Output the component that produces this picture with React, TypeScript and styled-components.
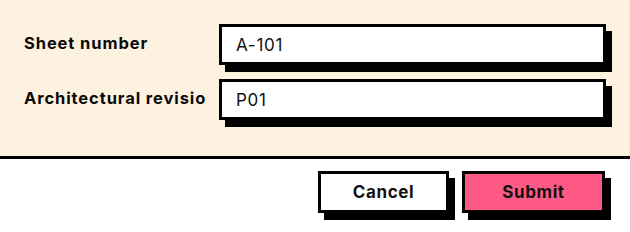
import React from "react";
import styled, { createGlobalStyle } from "styled-components";

const Global = createGlobalStyle`
  html, body { margin: 0; padding: 0; background: #ffffff; }
  * { box-sizing: border-box; }
  body { font-family: Inter, "Noto Sans", sans-serif; color: #0a0a0a; }
`;

const Page = styled.div`
  width: 630px;
  display: flex;
  flex-direction: column;
`;

const Form = styled.div`
  background: #fdf1df;
  border-bottom: 3px solid #000;
  padding: 24px 24px 36px 24px;
  display: flex;
  flex-direction: column;
  gap: 14px;
`;

const Row = styled.div`
  display: grid;
  grid-template-columns: 183px 1fr;
  column-gap: 12px;
  align-items: center;
  height: 41px;
`;

const Label = styled.label`
  font-size: 16.5px;
  font-weight: 700;
  letter-spacing: 0.9px;
  white-space: nowrap;
  overflow: hidden;
  line-height: 20px;
  margin-top: -4px;
`;

const Input = styled.input`
  height: 41px;
  width: 100%;
  border: 3px solid #000;
  box-shadow: 6px 7px 0 #000;
  background: #fff;
  padding: 0 14px;
  font-family: Inter, "Noto Sans", sans-serif;
  font-size: 17px;
  letter-spacing: 0.7px;
  color: #111;
  outline: none;
  border-radius: 0;
`;

const Footer = styled.div`
  display: flex;
  justify-content: flex-end;
  gap: 13px;
  padding: 12px 25px 19px 0;
`;

const Button = styled.button<{ $primary?: boolean }>`
  height: 42px;
  width: ${(p) => (p.$primary ? "143px" : "131px")};
  border: 3px solid #000;
  box-shadow: 6px 7px 0 #000;
  background: ${(p) => (p.$primary ? "#ff5a86" : "#ffffff")};
  font-family: Inter, "Noto Sans", sans-serif;
  font-size: 17px;
  font-weight: 700;
  letter-spacing: 0.6px;
  color: #111;
  border-radius: 0;
  cursor: pointer;
  padding: 0;
`;

export default function App() {
  return (
    <Page>
      <Global />
      <Form>
        <Row>
          <Label>Sheet number</Label>
          <Input defaultValue="A-101" />
        </Row>
        <Row>
          <Label>Architectural revision</Label>
          <Input defaultValue="P01" />
        </Row>
      </Form>
      <Footer>
        <Button>Cancel</Button>
        <Button $primary>Submit</Button>
      </Footer>
    </Page>
  );
}
